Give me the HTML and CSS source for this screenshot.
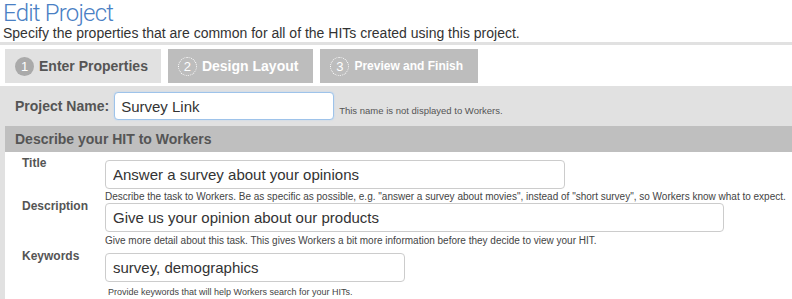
FILE: index.html
```html
<!DOCTYPE html>
<html lang="en">
<head>
    <meta charset="UTF-8">
    <title>Edit Project</title>
    <link rel="stylesheet" href="styles.css">
</head>
<body>

<div class="page-head">
    <h1>Edit Project</h1>
    <p class="subtitle">Specify the properties that are common for all of the HITs created using this project.</p>
</div>
<div class="rule"></div>

<div class="tabs">
    <div class="tab active"><span class="step">1</span>Enter Properties</div>
    <div class="tab"><span class="step">2</span>Design Layout</div>
    <div class="tab small"><span class="step">3</span>Preview and Finish</div>
</div>

<div class="panel">
    <div class="name-row">
        <label for="project-name">Project Name:</label>
        <input type="text" id="project-name" class="name-input" value="Survey Link">
        <span class="note">This name is not displayed to Workers.</span>
    </div>

    <div class="section-head">Describe your HIT to Workers</div>

    <div class="fields">
        <div class="field">
            <label for="title">Title</label>
            <div>
                <input type="text" id="title" class="w-title" value="Answer a survey about your opinions">
                <div class="hint">Describe the task to Workers. Be as specific as possible, e.g. "answer a survey about movies", instead of "short survey", so Workers know what to expect.</div>
            </div>
        </div>
        <div class="field">
            <label for="description">Description</label>
            <div>
                <input type="text" id="description" class="w-desc" value="Give us your opinion about our products">
                <div class="hint spaced">Give more detail about this task. This gives Workers a bit more information before they decide to view your HIT.</div>
            </div>
        </div>
        <div class="field">
            <label for="keywords">Keywords</label>
            <div>
                <input type="text" id="keywords" class="w-keys" value="survey, demographics">
                <div class="hint low">Provide keywords that will help Workers search for your HITs.</div>
            </div>
        </div>
    </div>
</div>

</body>
</html>
```

FILE: styles.css
```css
body {
    margin: 0;
    height: 299px;
    font-family: "Liberation Sans", Arial, sans-serif;
    color: #333;
    background: #fff;
    overflow: hidden;
}
.page-head {
    padding-left: 3px;
}
h1 {
    margin: 0;
    font-family: Roboto, "Liberation Sans", sans-serif;
    font-weight: 300;
    font-size: 24px;
    line-height: 26px;
    letter-spacing: -0.8px;
    color: #4a80c4;
}
.subtitle {
    margin: -1px 0 0;
    font-size: 14px;
    line-height: 17px;
    color: #333;
}
.rule {
    height: 3px;
    background: #e1e1e1;
}
.tabs {
    display: flex;
    gap: 7px;
    padding: 4px 0 3px 5px;
}
.tab {
    display: flex;
    align-items: center;
    height: 34px;
    padding: 0 15px 0 10px;
    background: #bdbdbd;
    color: #fff;
    font-weight: bold;
    font-size: 14px;
}
.tab.active {
    padding-right: 13px;
    background: #e1e1e1;
    color: #555;
}
.tab.small {
    font-size: 12px;
    padding-right: 15px;
}
.step {
    display: inline-flex;
    align-items: center;
    justify-content: center;
    width: 17px;
    height: 17px;
    margin-right: 5px;
    border: 1px dotted #fff;
    border-radius: 50%;
    font-weight: normal;
    font-size: 13px;
    color: #fff;
}
.tab.active .step {
    background: #aaa;
    border-color: #aaa;
}
.panel {
    background: #e1e1e1;
    padding-left: 5px;
}
.name-row {
    display: flex;
    align-items: center;
    height: 40px;
    padding-left: 10px;
}
.name-row label {
    font-weight: bold;
    font-size: 14px;
    color: #555;
    margin-right: 5px;
}
.name-input {
    width: 220px;
    height: 28px;
    box-sizing: border-box;
    padding: 0 6px;
    border: 1px solid #9ec3ea;
    border-radius: 4px;
    font-family: inherit;
    font-size: 15px;
    color: #333;
    box-shadow: 0 0 2px #b9d4f0;
}
.note {
    margin: 8px 0 0 5px;
    font-size: 9.5px;
    color: #555;
}
.section-head {
    height: 26px;
    line-height: 26px;
    padding-left: 10px;
    background: #bfbfbf;
    font-weight: bold;
    font-size: 14px;
    color: #555;
}
.fields {
    box-sizing: border-box;
    height: 147px;
    padding-top: 8px;
    background: #fff;
    overflow: hidden;
}
.field {
    display: grid;
    grid-template-columns: 100px auto;
}
.field label {
    margin-top: -4px;
    padding-left: 17px;
    font-weight: bold;
    font-size: 12px;
    color: #555;
}
.field input {
    display: block;
    height: 29px;
    box-sizing: border-box;
    padding: 0 7px;
    border: 1px solid #ccc;
    border-radius: 4px;
    font-family: inherit;
    font-size: 15px;
    color: #333;
}
.w-title { width: 460px; }
.w-desc { width: 619px; }
.w-keys { width: 300px; }
.hint {
    margin-top: 2px;
    font-size: 10px;
    line-height: 12px;
    color: #444;
    white-space: nowrap;
}
.hint.spaced {
    margin: 3px 0 6px;
}
.hint.low {
    margin: 4px 0 0 3px;
    font-size: 9px;
}
```
